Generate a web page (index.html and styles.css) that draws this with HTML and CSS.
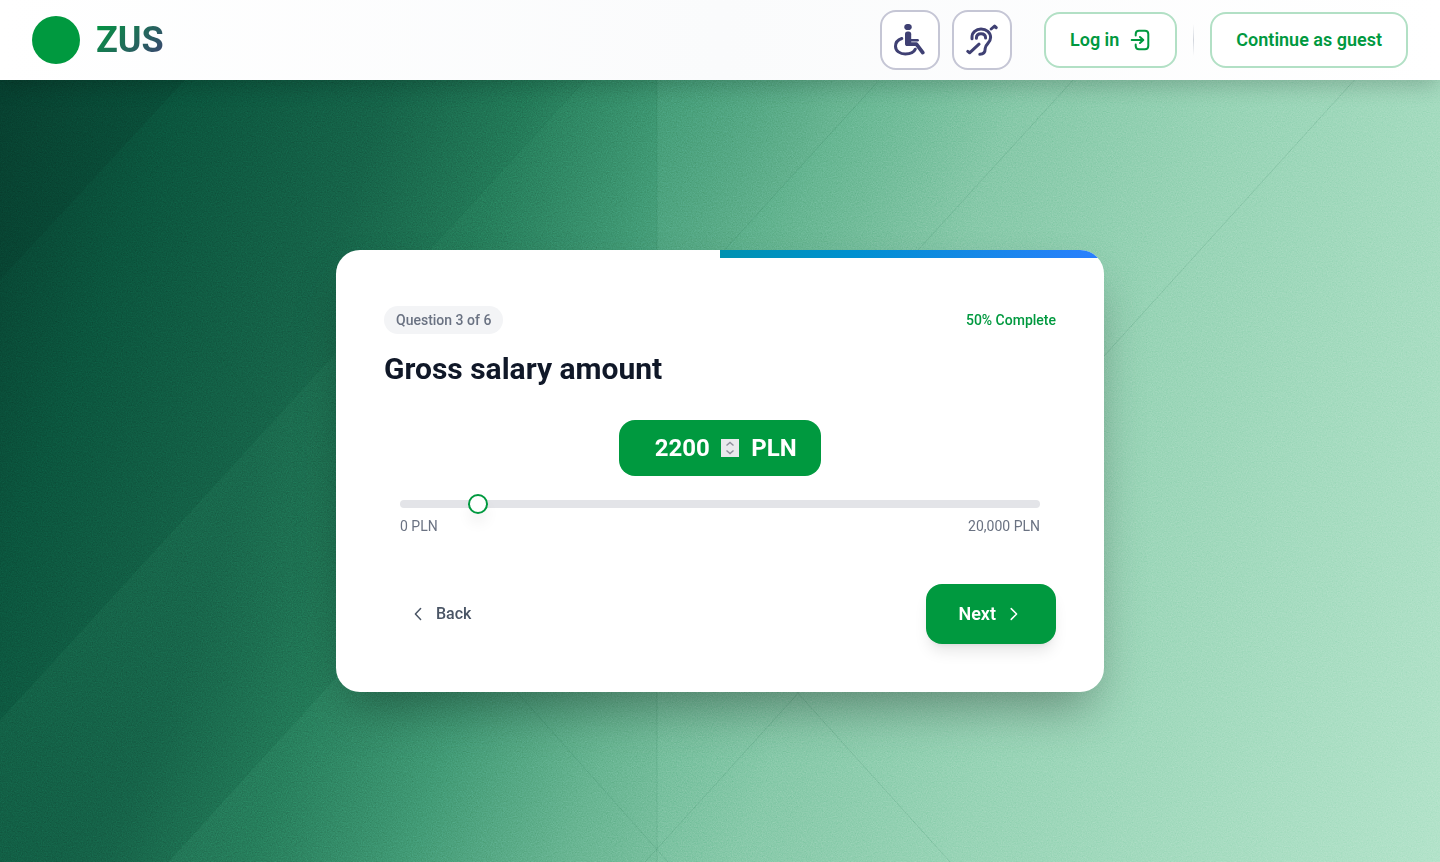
FILE: index.html
```html
<!DOCTYPE html>
<html lang="en">
<head>
<meta charset="utf-8">
<meta name="viewport" content="width=device-width, initial-scale=1">
<title>ZUS – Gross salary amount</title>
<link rel="stylesheet" href="styles.css">
</head>
<body>
<svg class="backdrop" viewBox="0 0 1440 862" preserveAspectRatio="none" aria-hidden="true">
  <defs>
    <linearGradient id="base" gradientUnits="userSpaceOnUse" x1="0" y1="0" x2="1549" y2="564">
      <stop offset="0" stop-color="#063c2d"/>
      <stop offset=".12" stop-color="#0b563e"/>
      <stop offset=".24" stop-color="#166449"/>
      <stop offset=".32" stop-color="#237a58"/>
      <stop offset=".41" stop-color="#429b76"/>
      <stop offset=".5" stop-color="#68b592"/>
      <stop offset=".6" stop-color="#87c9a9"/>
      <stop offset=".72" stop-color="#98d4b6"/>
      <stop offset=".84" stop-color="#a4dbbf"/>
      <stop offset="1" stop-color="#b3e3ca"/>
    </linearGradient>
    <linearGradient id="facetB" gradientUnits="userSpaceOnUse" x1="230" y1="470" x2="330" y2="560">
      <stop offset="0" stop-color="#3fa377" stop-opacity=".1"/>
      <stop offset="1" stop-color="#3fa377" stop-opacity="0"/>
    </linearGradient>
    <linearGradient id="facetC" gradientUnits="userSpaceOnUse" x1="336" y1="677" x2="436" y2="767">
      <stop offset="0" stop-color="#5bc094" stop-opacity=".1"/>
      <stop offset="1" stop-color="#5bc094" stop-opacity="0"/>
    </linearGradient>
    <linearGradient id="facetV" x1="0" x2="1" y1="0" y2="0">
      <stop offset="0" stop-color="#a5e6c8" stop-opacity=".08"/>
      <stop offset="1" stop-color="#a5e6c8" stop-opacity="0"/>
    </linearGradient>
    <linearGradient id="facetA" gradientUnits="userSpaceOnUse" x1="92" y1="180" x2="12" y2="107">
      <stop offset="0" stop-color="#02281f" stop-opacity=".14"/>
      <stop offset="1" stop-color="#02281f" stop-opacity="0"/>
    </linearGradient>
    <filter id="grain" x="0" y="0" width="100%" height="100%" color-interpolation-filters="sRGB">
      <feTurbulence type="fractalNoise" baseFrequency=".8" numOctaves="3" seed="4"/>
      <feColorMatrix values=".33 .33 .33 0 0 .33 .33 .33 0 0 .33 .33 .33 0 0 0 0 0 0 1"/>
    </filter>
  </defs>
  <rect width="1440" height="862" fill="url(#base)"/>
  <path d="M0 0H259L0 280Z" fill="url(#facetA)"/>
  <path d="M0 720L658 0H952L168 862H0Z" fill="url(#facetB)"/>
  <path d="M168 862L952 0H1440V862Z" fill="url(#facetC)"/>
  <path d="M657 0H800V862H657Z" fill="url(#facetV)"/>
  <g class="creases">
    <path d="M0 720L658 0M168 862L952 0M515 692L1146 0M645 862L1427 0"/>
    <path d="M20 133L668 862M797 692L950 862M657 0V862"/>
  </g>
  <rect class="grain" width="1440" height="862" filter="url(#grain)"/>
</svg>

<div class="page">
  <header class="topbar">
    <a class="brand" href="#">
      <span class="brand-mark"></span>
      <span class="brand-name">ZUS</span>
    </a>
    <nav class="actions" aria-label="Account and accessibility">
      <div class="access">
        <button class="icon-button" type="button" aria-label="Accessibility">
          <svg viewBox="0 0 32 32" aria-hidden="true">
            <ellipse class="solid" cx="14" cy="3" rx="3.8" ry="3.1"/>
            <rect class="solid" x="11" y="7.6" width="6.2" height="14.4" rx="2.6"/>
            <path d="M15 16.2H23.6" stroke-width="2.6"/>
            <path d="M13.5 20.2H22.4L28.8 28.6" stroke-width="3.8"/>
            <path d="M7.8 14.5C4 15.8 1.5 18.6 1.5 22.2C1.5 26.8 6 30 11.3 30C16.4 30 20.2 27.8 21.3 25.2" stroke-width="3"/>
          </svg>
        </button>
        <button class="icon-button" type="button" aria-label="Hearing assistance">
          <svg viewBox="0 0 32 32" aria-hidden="true">
            <path d="M6 14.8V13C6 8.4 10 5 15 5C20.4 5 24.6 8.6 24.6 13.5C24.6 19.4 19.4 19.6 19.2 24.4C19.2 28.2 17.5 30.2 13.8 30.2" stroke-width="3"/>
            <path d="M10.4 14.2C10.4 11.2 12.2 9.8 15 9.8C17.8 9.8 19.6 11.4 19.6 14" stroke-width="3"/>
            <path d="M13 20.2L3.6 28.8L1.8 27.4" stroke-width="3"/>
            <path d="M25.2 5L28.6 2L30.2 3.6" stroke-width="3"/>
          </svg>
        </button>
      </div>
      <div class="account">
        <button class="outline-button" type="button">Log in
          <svg viewBox="0 0 24 24" aria-hidden="true"><path d="M8.7 7.5V6A3.3 3.3 0 0 1 12 2.8H18A3.3 3.3 0 0 1 21.3 6V18A3.3 3.3 0 0 1 18 21.2H12A3.3 3.3 0 0 1 8.7 18V16.5M4.7 12H16M13 9L16.3 12L13 15"/></svg>
        </button>
        <span class="divider"></span>
        <button class="outline-button" type="button">Continue as guest</button>
      </div>
    </nav>
  </header>

  <main class="stage">
    <form class="card">
      <div class="progress" role="progressbar" aria-label="Progress" aria-valuenow="50" aria-valuemin="0" aria-valuemax="100">
        <div class="progress-fill" style="width: 50%"></div>
      </div>
      <div class="card-body">
        <div class="status">
          <span class="badge">Question 3 of 6</span>
          <span class="complete">50% Complete</span>
        </div>
        <h1 class="title">Gross salary amount</h1>
        <div class="amount-row">
          <label class="amount"><input class="amount-input" type="number" value="2200" min="0" max="20000" aria-label="Gross salary in PLN"><span>PLN</span></label>
        </div>
        <div class="slider-block">
          <input class="slider" type="range" min="0" max="20000" value="2200" aria-label="Gross salary">
          <div class="limits"><span>0 PLN</span><span>20,000 PLN</span></div>
        </div>
        <div class="steps">
          <button class="back" type="button"><svg viewBox="0 0 20 20" aria-hidden="true"><path d="M12.6 4.6L7.4 10L12.6 15.4"/></svg>Back</button>
          <button class="next" type="submit">Next<svg viewBox="0 0 20 20" aria-hidden="true"><path d="M7.2 4.6L12.6 10L7.2 15.4"/></svg></button>
        </div>
      </div>
    </form>
  </main>
</div>
</body>
</html>
```
FILE: styles.css
```css
:root {
  --green: #00993f;
  --navy: #3f4073;
  --muted: #6a7282;
}

* { box-sizing: border-box; }

body {
  margin: 0;
  background: #449d78;
  color: #101828;
  font-family: Roboto, "Liberation Sans", sans-serif;
  font-size: 16px;
  line-height: 24px;
}

button, input { font: inherit; }
button { cursor: pointer; }

svg {
  display: block;
  fill: none;
  stroke: currentColor;
  stroke-linecap: round;
  stroke-linejoin: round;
}

.backdrop {
  position: fixed;
  inset: 0;
  width: 100%;
  height: 100%;
  stroke: none;
}

.creases {
  stroke: #0d5c41;
  stroke-opacity: .13;
  stroke-width: 1;
}

.grain {
  mix-blend-mode: overlay;
  opacity: .25;
}

.page {
  position: relative;
  display: flex;
  flex-direction: column;
  min-height: 100vh;
}

.topbar {
  display: flex;
  align-items: center;
  justify-content: space-between;
  padding: 10px 32px;
  background: linear-gradient(90deg, #ffffff, #fafbfc 50%, #ffffff);
  box-shadow: 0 8px 20px -2px rgba(0, 0, 0, .18);
}

.brand {
  display: flex;
  align-items: center;
  gap: 16px;
  text-decoration: none;
}

.brand-mark {
  width: 48px;
  height: 48px;
  border-radius: 50%;
  background: var(--green);
}

.brand-name {
  background: linear-gradient(135deg, var(--green), var(--navy));
  background-clip: text;
  -webkit-background-clip: text;
  color: transparent;
  font-size: 36px;
  font-weight: 700;
  line-height: 40px;
}

.actions {
  display: flex;
  align-items: center;
  gap: 32px;
}

.access {
  display: flex;
  gap: 12px;
}

.icon-button {
  padding: 12px;
  border: 2px solid #c5c6d5;
  border-radius: 16px;
  background: #fff;
  color: var(--navy);
}

.icon-button svg {
  width: 32px;
  height: 32px;
}

.solid {
  fill: currentColor;
  stroke: none;
}

.account {
  display: flex;
  align-items: center;
  gap: 16px;
}

.outline-button {
  display: flex;
  align-items: center;
  gap: 8px;
  padding: 12px 24px;
  border: 2px solid #b2e0c5;
  border-radius: 16px;
  background: #fff;
  color: var(--green);
  font-size: 18px;
  font-weight: 600;
  line-height: 28px;
}

.outline-button svg {
  width: 24px;
  height: 24px;
  stroke-width: 2;
}

.divider {
  width: 1px;
  height: 32px;
  background: linear-gradient(transparent, #d1d5dc, transparent);
}

.stage {
  display: flex;
  flex: 1;
  align-items: center;
  justify-content: center;
  padding: 32px;
}

.card {
  width: 100%;
  max-width: 768px;
  overflow: hidden;
  border-radius: 24px;
  background: #fff;
  box-shadow: 0 25px 50px -12px rgba(0, 0, 0, .35);
}

.progress {
  display: flex;
  justify-content: flex-end;
}

.progress-fill {
  height: 8px;
  background: linear-gradient(90deg, #0092b0, #0090d0 35%, #2b7fff);
}

.card-body { padding: 48px; }

.status {
  display: flex;
  align-items: center;
  justify-content: space-between;
  margin-bottom: 16px;
  font-size: 14px;
  font-weight: 500;
  line-height: 20px;
}

.badge {
  padding: 4px 12px;
  border-radius: 14px;
  background: #f3f4f6;
  color: var(--muted);
}

.complete { color: var(--green); }

.title {
  margin: 0 0 32px;
  font-size: 30px;
  font-weight: 700;
  line-height: 38px;
}

.amount-row {
  display: flex;
  justify-content: center;
  margin-bottom: 24px;
}

.amount {
  display: flex;
  align-items: center;
  gap: 12px;
  padding: 12px 24px;
  border-radius: 16px;
  background: var(--green);
  color: #fff;
  font-size: 24px;
  font-weight: 700;
  line-height: 32px;
}

.amount-input {
  width: 96px;
  height: 32px;
  padding: 0;
  border: 0;
  outline: 0;
  background: transparent;
  color: inherit;
  text-align: center;
}

.amount-input::-webkit-inner-spin-button {
  width: 18px;
  height: 18px;
  margin: 0;
  align-self: center;
  appearance: none;
  background: #e9e9ed url("data:image/svg+xml,%3Csvg xmlns='http://www.w3.org/2000/svg' viewBox='0 0 18 18' fill='none' stroke='%238f8f9d' stroke-width='1.4'%3E%3Cpath d='M5.5 6.5L9 3.5L12.5 6.5M5.5 11.5L9 14.5L12.5 11.5'/%3E%3C/svg%3E") center / 18px 18px no-repeat;
  opacity: 1;
}

.slider-block {
  padding: 0 16px;
  margin-bottom: 48px;
}

.slider {
  display: block;
  width: 100%;
  height: 8px;
  margin: 0 0 8px;
  border-radius: 4px;
  background: #e3e4e8;
  appearance: none;
}

.slider::-webkit-slider-thumb {
  width: 20px;
  height: 20px;
  border: 2px solid var(--green);
  border-radius: 50%;
  background: #fff;
  box-shadow: 0 10px 15px -3px rgba(0, 0, 0, .1);
  appearance: none;
}

.limits {
  display: flex;
  justify-content: space-between;
  color: var(--muted);
  font-size: 14px;
  line-height: 20px;
}

.steps {
  display: flex;
  align-items: center;
  justify-content: space-between;
}

.steps svg {
  width: 20px;
  height: 20px;
  stroke-width: 1.5;
}

.back, .next {
  display: flex;
  align-items: center;
  gap: 8px;
  border: 0;
}

.back {
  padding: 12px 24px;
  background: transparent;
  color: #4a5565;
  font-weight: 500;
}

.next {
  padding: 16px 32px;
  border-radius: 16px;
  background: var(--green);
  box-shadow: 0 10px 15px -3px rgba(0, 0, 0, .1), 0 4px 6px -4px rgba(0, 0, 0, .1);
  color: #fff;
  font-size: 18px;
  font-weight: 600;
  line-height: 28px;
}
```
